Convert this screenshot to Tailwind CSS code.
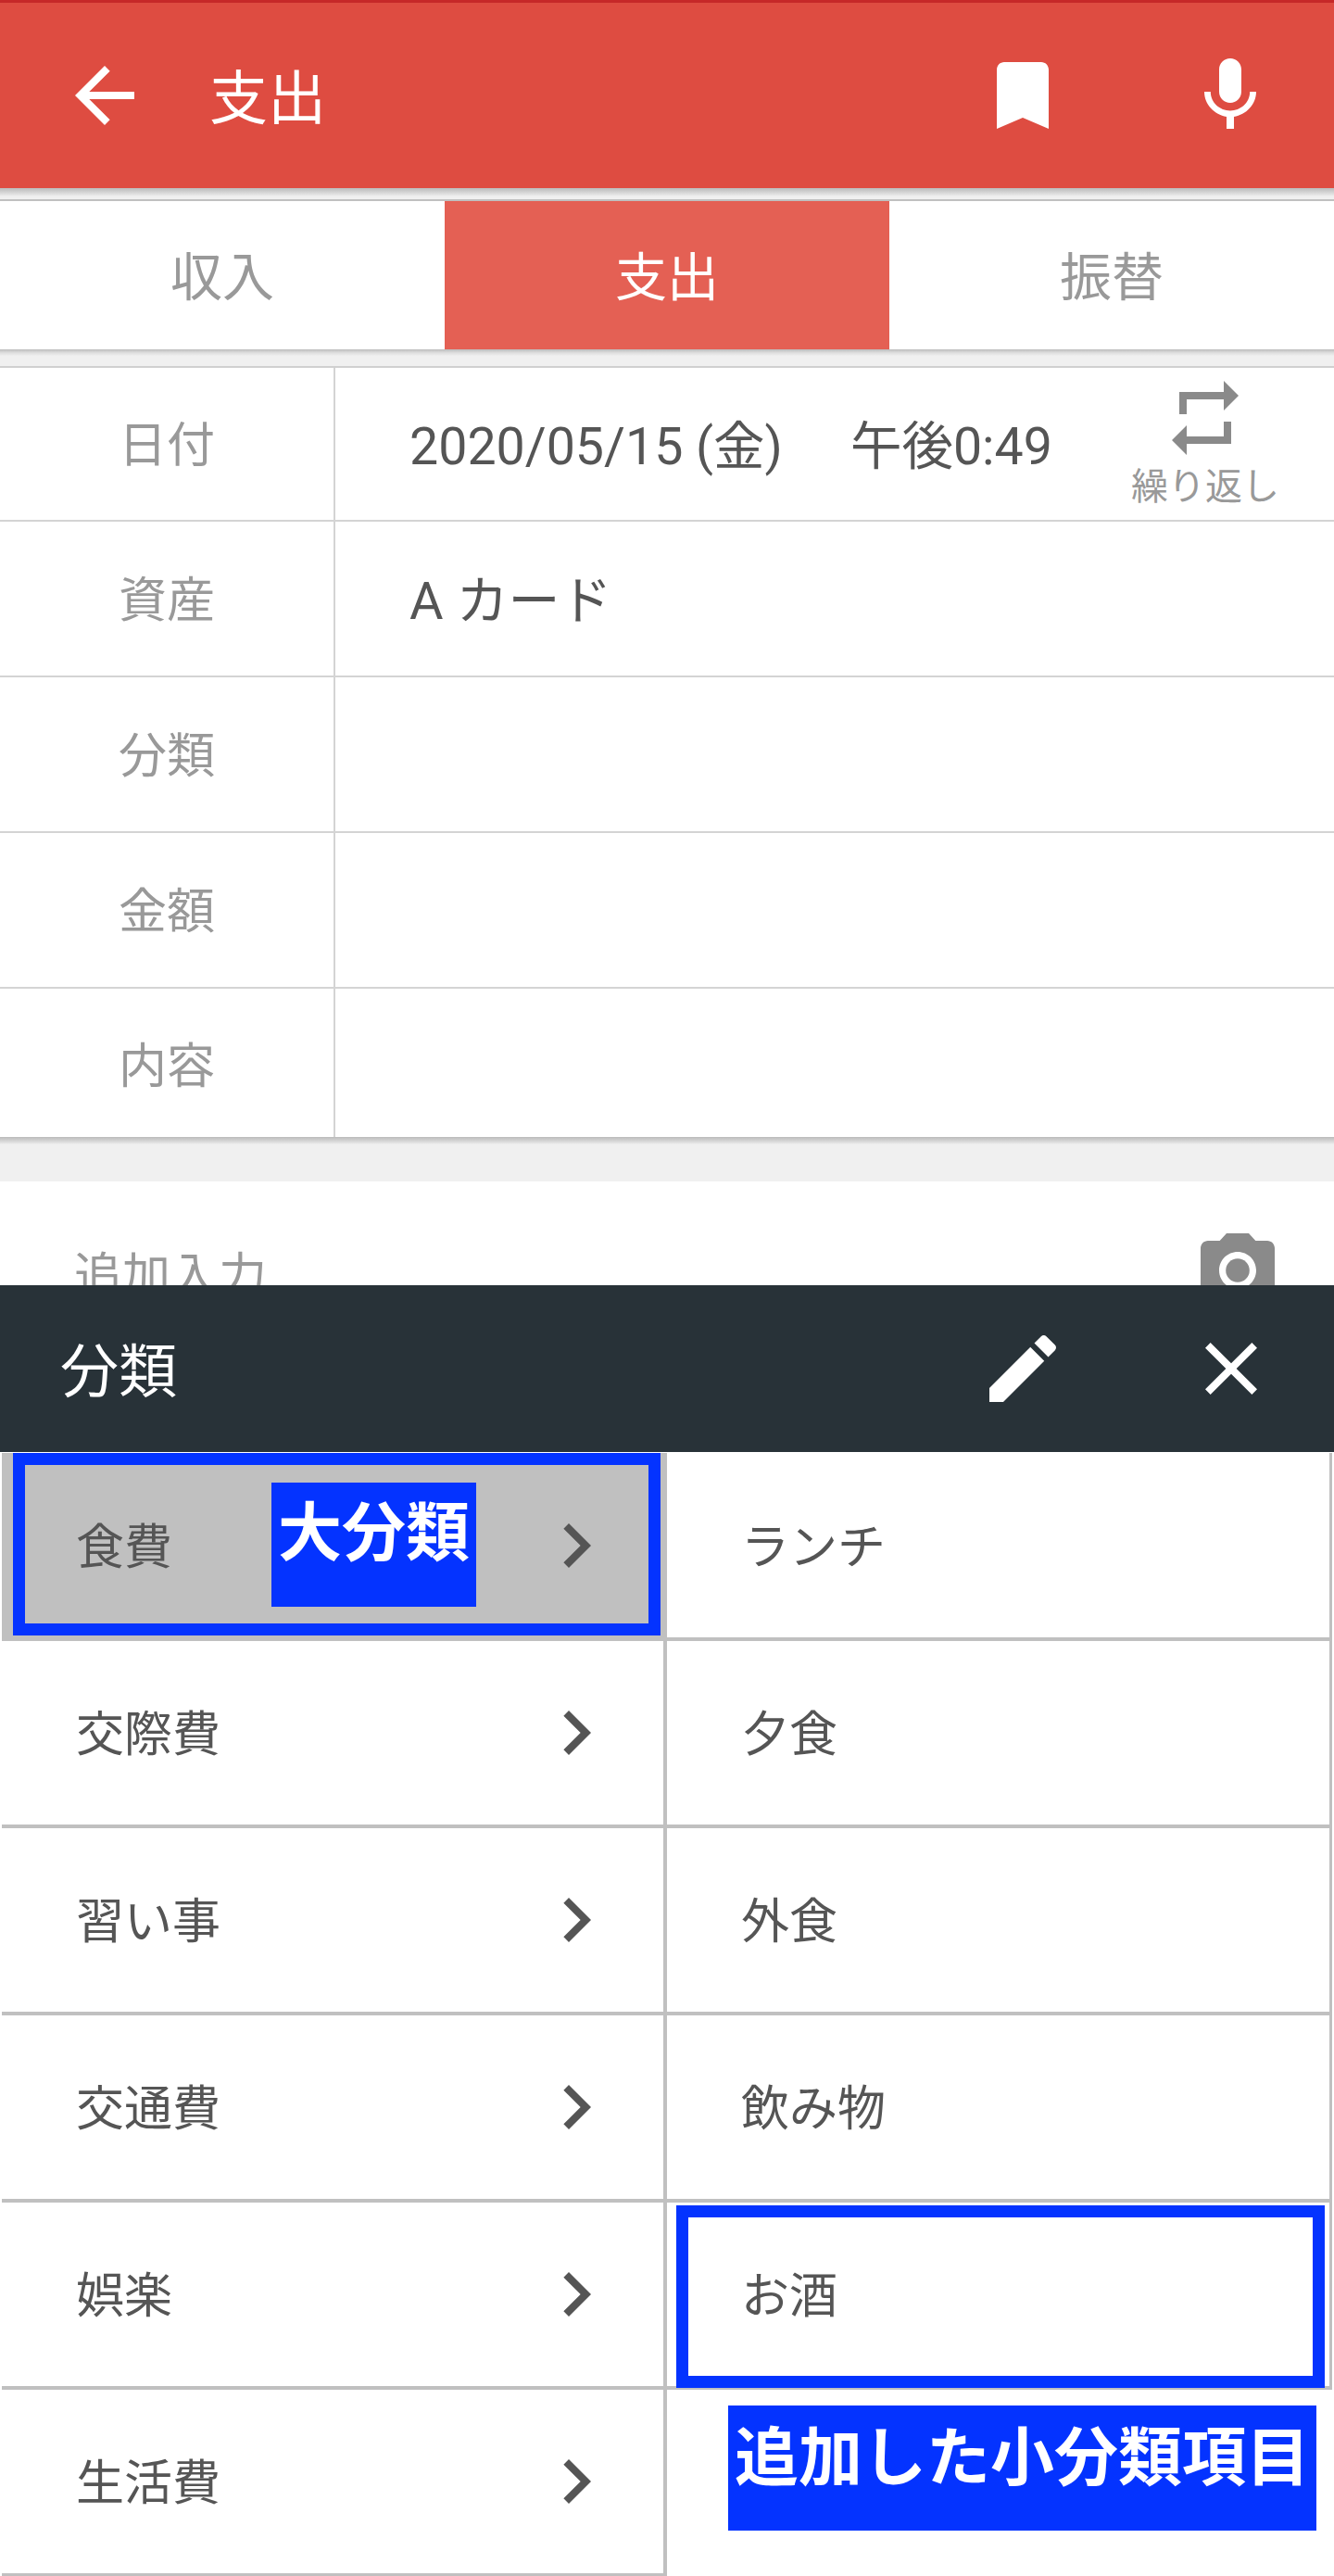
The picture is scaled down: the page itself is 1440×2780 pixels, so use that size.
<!DOCTYPE html>
<html lang="ja">
<head>
  <meta charset="UTF-8" />
  <meta name="viewport" content="width=device-width, initial-scale=1.0" />
  <title>支出</title>
  <script src="https://cdn.jsdelivr.net/npm/@tailwindcss/browser@4"></script>
</head>
<body class="bg-white font-['Roboto','Noto_Sans_CJK_JP',sans-serif] text-[#555]">
  <div class="relative w-[1440px] h-[2780px] overflow-hidden">

    <!-- 入力フォーム -->
    <div class="h-[1387px] overflow-hidden bg-white">
      <header class="h-[203px] bg-[#de4c41] border-t-[3px] border-[#c62828] flex items-center text-white">
        <svg class="w-24 h-24 ml-[65px] fill-current" viewBox="0 0 24 24"><path d="M20 11H7.83l5.59-5.59L12 4l-8 8 8 8 1.41-1.41L7.83 13H20v-2z"/></svg>
        <h1 class="ml-[65px] pt-[7px] text-[63px] leading-none">支出</h1>
        <svg class="w-24 h-24 ml-auto fill-current" viewBox="0 0 24 24"><path d="M17 3H7c-1.1 0-1.99.9-1.99 2L5 21l7-3 7 3V5c0-1.1-.9-2-2-2z"/></svg>
        <svg class="w-24 h-24 ml-[128px] mr-[64px] fill-current" viewBox="0 0 24 24"><path d="M12 14c1.66 0 2.99-1.34 2.99-3L15 5c0-1.66-1.34-3-3-3S9 3.34 9 5v6c0 1.66 1.34 3 3 3zm5.3-3c0 3-2.54 5.1-5.3 5.1S6.7 14 6.7 11H5c0 3.41 2.72 6.23 6 6.72V21h2v-3.28c3.28-.48 6-3.3 6-6.72h-1.7z"/></svg>
      </header>
      <div class="h-[12px] bg-[linear-gradient(#bbb,#ddd_50%,#f0f0f0_75%)]"></div>
      <div class="h-[162px] grid grid-cols-3 border-t-2 border-[#c0c0c0] text-[56px]">
        <div class="flex items-center justify-center pt-[6px] text-[#999]">収入</div>
        <div class="flex items-center justify-center pt-[6px] bg-[#e46054] text-white">支出</div>
        <div class="flex items-center justify-center pt-[6px] text-[#999]">振替</div>
      </div>
      <div class="h-[20px] bg-[linear-gradient(#bbb,#ddd_20%,#f0f0f0_40%)] border-b-2 border-[#d0d0d0]"></div>

      <div class="text-[52px]">
        <div class="h-[166px] flex border-b-2 border-[#d4d4d4]">
          <div class="w-[362px] border-r-2 border-[#d4d4d4] flex items-center justify-center pt-[6px] text-[#999]">日付</div>
          <div class="flex-1 relative flex items-center pl-[80px] pt-[8px] text-[55.5px] whitespace-nowrap">
            <span>2020/05/15 (金)</span><span class="ml-[73px]">午後0:49</span>
            <div class="absolute right-[39px] top-0 w-[200px] flex flex-col items-center text-[#999]">
              <svg class="w-24 h-24 mt-[6px] fill-[#8a8a8a]" viewBox="0 0 24 24"><path d="M7 7h10v3l4-4-4-4v3H5v6h2V7zm10 10H7v-3l-4 4 4 4v-3h12v-6h-2v4z"/></svg>
              <span class="pt-[3px] text-[40px] leading-[48px]">繰り返し</span>
            </div>
          </div>
        </div>
        <div class="h-[168px] flex border-b-2 border-[#d4d4d4]">
          <div class="w-[362px] border-r-2 border-[#d4d4d4] flex items-center justify-center pt-[6px] text-[#999]">資産</div>
          <div class="flex-1 flex items-center pl-[80px] pt-[6px] text-[56px]">A カード</div>
        </div>
        <div class="h-[168px] flex border-b-2 border-[#d4d4d4]">
          <div class="w-[362px] border-r-2 border-[#d4d4d4] flex items-center justify-center pt-[6px] text-[#999]">分類</div>
          <div class="flex-1"></div>
        </div>
        <div class="h-[168px] flex border-b-2 border-[#d4d4d4]">
          <div class="w-[362px] border-r-2 border-[#d4d4d4] flex items-center justify-center pt-[6px] text-[#999]">金額</div>
          <div class="flex-1"></div>
        </div>
        <div class="h-[160px] flex">
          <div class="w-[362px] border-r-2 border-[#d4d4d4] flex items-center justify-center pt-[10px] text-[#999]">内容</div>
          <div class="flex-1"></div>
        </div>
      </div>
      <div class="h-[48px] bg-[linear-gradient(#bbb,#d8d8d8_10%,#f0f0f0_17%)]"></div>

      <div class="h-[200px] flex items-start justify-between pl-[80px] pr-[56px] text-[#999]">
        <span class="text-[52px] mt-[77px] leading-none">追加入力</span>
        <svg class="w-24 h-24 mt-[48px] fill-[#8a8a8a]" viewBox="0 0 24 24"><circle cx="12" cy="12" r="3.2"/><path d="M9 2L7.17 4H4c-1.1 0-2 .9-2 2v12c0 1.1.9 2 2 2h16c1.1 0 2-.9 2-2V6c0-1.1-.9-2-2-2h-3.17L15 2H9zm3 15c-2.76 0-5-2.24-5-5s2.24-5 5-5 5 2.24 5 5-2.24 5-5 5z"/></svg>
      </div>
    </div>

    <!-- 分類パネル -->
    <div class="h-[180px] bg-[#283238] flex items-center text-white">
      <h2 class="ml-[65px] pt-[7px] text-[63px] leading-none">分類</h2>
      <svg class="w-24 h-24 ml-auto fill-current" viewBox="0 0 24 24"><path d="M3 17.25V21h3.75L17.81 9.94l-3.75-3.75L3 17.25zM20.71 7.04c.39-.39.39-1.02 0-1.41l-2.34-2.34c-.39-.39-1.02-.39-1.41 0l-1.83 1.83 3.75 3.75 1.83-1.83z"/></svg>
      <svg class="w-24 h-24 ml-[129px] mr-[63px] fill-current" viewBox="0 0 24 24"><path d="M19 6.41L17.59 5 12 10.59 6.41 5 5 6.41 10.59 12 5 17.59 6.41 19 12 13.41 17.59 19 19 17.59 13.41 12z"/></svg>
    </div>

    <div class="grid grid-cols-[718px_718px] text-[52px] ml-[2px] mt-px w-[1436px]">
      <div class="h-[203px] bg-[#c0c0c0] border-r-4 border-b-4 border-[#c0c0c0] flex items-center justify-between pl-[80px] pr-[46px]"><span class="pt-[6px]">食費</span><svg class="w-24 h-24 fill-[#555]" viewBox="0 0 24 24"><path d="M10 6L8.59 7.41 13.17 12l-4.58 4.59L10 18l6-6z"/></svg></div>
      <div class="h-[203px] border-r-[3px] border-b-4 border-[#c0c0c0] flex items-center pl-[80px]"><span class="pt-[6px]">ランチ</span></div>

      <div class="h-[202px] border-r-4 border-b-4 border-[#c0c0c0] flex items-center justify-between pl-[80px] pr-[46px]"><span class="pt-[6px]">交際費</span><svg class="w-24 h-24 fill-[#555]" viewBox="0 0 24 24"><path d="M10 6L8.59 7.41 13.17 12l-4.58 4.59L10 18l6-6z"/></svg></div>
      <div class="h-[202px] border-r-[3px] border-b-4 border-[#c0c0c0] flex items-center pl-[80px]"><span class="pt-[6px]">夕食</span></div>

      <div class="h-[202px] border-r-4 border-b-4 border-[#c0c0c0] flex items-center justify-between pl-[80px] pr-[46px]"><span class="pt-[6px]">習い事</span><svg class="w-24 h-24 fill-[#555]" viewBox="0 0 24 24"><path d="M10 6L8.59 7.41 13.17 12l-4.58 4.59L10 18l6-6z"/></svg></div>
      <div class="h-[202px] border-r-[3px] border-b-4 border-[#c0c0c0] flex items-center pl-[80px]"><span class="pt-[6px]">外食</span></div>

      <div class="h-[202px] border-r-4 border-b-4 border-[#c0c0c0] flex items-center justify-between pl-[80px] pr-[46px]"><span class="pt-[6px]">交通費</span><svg class="w-24 h-24 fill-[#555]" viewBox="0 0 24 24"><path d="M10 6L8.59 7.41 13.17 12l-4.58 4.59L10 18l6-6z"/></svg></div>
      <div class="h-[202px] border-r-[3px] border-b-4 border-[#c0c0c0] flex items-center pl-[80px]"><span class="pt-[6px]">飲み物</span></div>

      <div class="h-[202px] border-r-4 border-b-4 border-[#c0c0c0] flex items-center justify-between pl-[80px] pr-[46px]"><span class="pt-[6px]">娯楽</span><svg class="w-24 h-24 fill-[#555]" viewBox="0 0 24 24"><path d="M10 6L8.59 7.41 13.17 12l-4.58 4.59L10 18l6-6z"/></svg></div>
      <div class="h-[202px] border-r-[3px] border-b-4 border-[#c0c0c0] flex items-center pl-[80px]"><span class="pt-[6px]">お酒</span></div>

      <div class="h-[202px] border-r-4 border-b-4 border-[#c0c0c0] flex items-center justify-between pl-[80px] pr-[46px]"><span class="pt-[6px]">生活費</span><svg class="w-24 h-24 fill-[#555]" viewBox="0 0 24 24"><path d="M10 6L8.59 7.41 13.17 12l-4.58 4.59L10 18l6-6z"/></svg></div>
      <div class="h-[202px]"></div>
    </div>

    <!-- 注釈 -->
    <div class="absolute left-[14px] top-[1568px] w-[699px] h-[197px] border-[13px] border-[#0433ff]"></div>
    <div class="absolute left-[293px] top-[1600px] w-[221px] h-[134px] bg-[#0433ff] text-white font-bold text-[69px] leading-[112px] text-center">大分類</div>
    <div class="absolute left-[730px] top-[2380px] w-[700px] h-[197px] border-[13px] border-[#0433ff]"></div>
    <div class="absolute left-[786px] top-[2596px] w-[635px] h-[135px] bg-[#0433ff] text-white font-bold text-[69px] leading-[116px] text-center whitespace-nowrap">追加した小分類項目</div>
  </div>
</body>
</html>
